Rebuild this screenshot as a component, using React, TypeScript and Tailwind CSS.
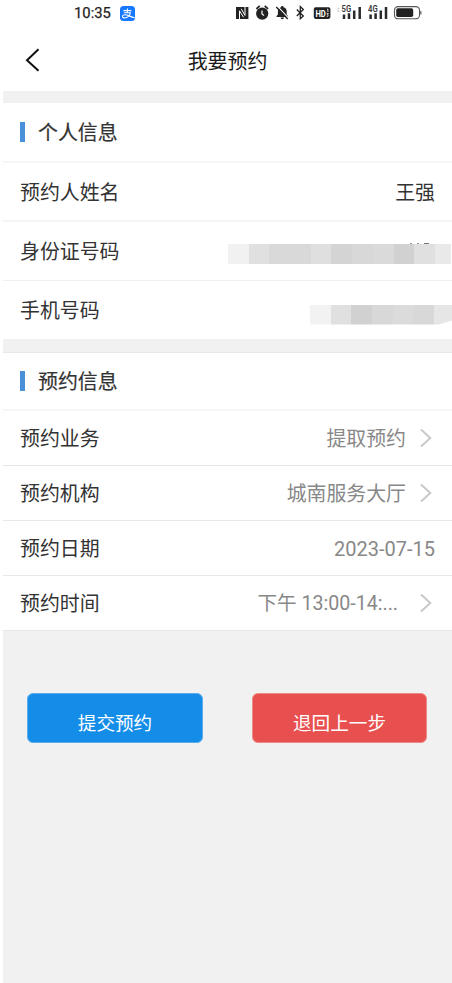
import type { ReactNode } from 'react'
import clsx from 'clsx'

const PAGE_LABELS = {
  TITLE: '我要预约',
  PERSONAL: '个人信息',
  BOOKING: '预约信息',
  SUBMIT: '提交预约',
  BACK: '退回上一步',
} as const

const ID_MASK = [
  '#f1f1f1',
  '#e0e0e0',
  '#d9d9d9',
  '#d9d9d9',
  '#dfdfdf',
  '#d4d4d4',
  '#d8d8d8',
  '#dadada',
  '#d1d1d1',
  '#e0e0e0',
  '#e9e9e9',
]

const PHONE_MASK = ['#f2f2f2', '#e0e0e0', '#d1d1d1', '#d8d8d8', '#dbdbdb', '#d8d8d8', '#e6e6e6']

function StatusIcons() {
  return (
    <svg className="ml-auto h-[26px] w-[192px]" viewBox="232 0 192 26" fill="none">
      {/* NFC */}
      <path d="M236 7h12.4v12H236z" fill="#222" />
      <path d="M239.5 19v-8.2l4 6.4M245 7v8.4l-3.8-6.6" stroke="#fff" strokeWidth="1" />
      {/* 闹钟 */}
      <circle cx="262.2" cy="13.6" r="6.1" fill="#222" />
      <path d="M256.3 8.8l3.4-2.8M268.1 8.8l-3.4-2.8" stroke="#222" strokeWidth="1.7" />
      <path d="M262 10.6v3.4l2 1.4" stroke="#fff" strokeWidth="1.2" />
      {/* 静音 */}
      <path
        d="M282.3 6c.8 0 1.2.5 1.2 1.2 2 .5 3.2 2 3.2 4v3.3l1.4 1.8v.7h-11.6v-.7l1.4-1.8v-3.3c0-2 1.2-3.5 3.2-4 0-.7.4-1.2 1.2-1.2z"
        fill="#222"
      />
      <path d="M280.6 17.6h3.4a1.7 1.7 0 0 1-3.4 0z" fill="#222" />
      <path d="M277.4 6.2l11 11.8" stroke="#fff" strokeWidth="1.1" />
      <path d="M276.3 7l11.4 12" stroke="#222" strokeWidth="1.4" />
      {/* 蓝牙 */}
      <path d="M296.8 9.5l6.5 6.5-3 2.8V6.6l3 2.8-6.5 6.6" stroke="#222" strokeWidth="1.3" />
      {/* HD */}
      <rect x="313.8" y="7.3" width="16.6" height="11.6" rx="1.8" fill="#222" />
      <text
        x="315.4"
        y="16.6"
        fill="#fff"
        fontSize="9.5"
        fontWeight="700"
        fontFamily="Roboto, sans-serif"
        textLength="10.4"
        lengthAdjust="spacingAndGlyphs"
      >
        HD
      </text>
      <path d="M327 9.2h.9v3M326.6 13.6h1.8l-1 1.3c1.2.2 1 1.9-.7 1.5" stroke="#fff" strokeWidth=".8" />
      {/* 5G */}
      <path d="M336.8 9.2l1.6-2 1.6 2zM336.8 10.6l1.6 2 1.6-2z" fill="#ccc" />
      <text
        x="341.6"
        y="12.2"
        fill="#333"
        fontSize="9.2"
        fontWeight="600"
        fontFamily="Roboto, sans-serif"
        textLength="9.6"
        lengthAdjust="spacingAndGlyphs"
      >
        5G
      </text>
      <path d="M344 14.6V19M349 13.2V19M354.2 10.5V19M359.7 7v12" stroke="#2a2a2a" strokeWidth="2.5" />
      {/* 4G */}
      <text
        x="368"
        y="12.2"
        fill="#333"
        fontSize="9.2"
        fontWeight="600"
        fontFamily="Roboto, sans-serif"
        textLength="9.6"
        lengthAdjust="spacingAndGlyphs"
      >
        4G
      </text>
      <path d="M370.6 14.6V19M375.6 13.2V19M380.8 10.5V19M386 7v12" stroke="#2a2a2a" strokeWidth="2.5" />
      {/* 电池 */}
      <rect x="394.5" y="6.6" width="25" height="12.2" rx="3.6" stroke="#555" strokeWidth="1.1" />
      <rect x="396.2" y="8.3" width="17" height="8.8" rx="1.8" fill="#222" />
      <path d="M420.8 11v3.6" stroke="#777" strokeWidth="1.4" />
    </svg>
  )
}

function SectionTitle({ className, children }: { className?: string; children: ReactNode }) {
  return (
    <div className={clsx('flex items-center border-b-2 border-[#f5f5f5] pl-[17px]', className)}>
      <span className="mr-[13px] h-5 w-[5px] bg-[#4a90d9]" />
      <h2 className="pt-1 [-webkit-text-stroke:0.2px_#333]">{children}</h2>
    </div>
  )
}

interface RowProps {
  label: string
  className?: string
  children: ReactNode
}

function Row({ label, className, children }: RowProps) {
  return (
    <div className={clsx('flex items-center justify-between pl-[17px]', className)}>
      <span className="pt-1">{label}</span>
      {children}
    </div>
  )
}

// 打码色块
function Mask({ shades, className }: { shades: string[]; className?: string }) {
  return (
    <div className={clsx('flex h-5 overflow-hidden', className)}>
      {shades.map((shade, i) => (
        <span key={i} className="w-[20.7px] shrink-0" style={{ backgroundColor: shade }} />
      ))}
    </div>
  )
}

interface SelectRowProps {
  label: string
  value: string
  arrow?: boolean
  gap?: string
  valueClass?: string
}

function SelectRow({ label, value, arrow = true, gap = 'ml-[14px]', valueClass = 'pt-1' }: SelectRowProps) {
  return (
    <Row label={label} className="h-[55px] border-b border-[#e8e8e8] pr-[17px]">
      <div className="flex items-center text-[#888]">
        <span className={valueClass}>{value}</span>
        {arrow && (
          <svg className={clsx('mr-[3px] h-5 w-3', gap)} viewBox="0 0 12 20" fill="none">
            <path d="M1 1.5l9.3 8.5L1 18.5" stroke="#c8c8c8" strokeWidth="1.9" />
          </svg>
        )}
      </div>
    </Row>
  )
}

export default function App() {
  return (
    <div className="h-[983px] w-[452px] overflow-hidden bg-white pl-[3px] font-[Roboto,'Noto_Sans_CJK_SC',sans-serif] text-[19.9px] leading-none text-[#333]">
      <div className="flex h-[26px] items-center pr-[28px] pl-[71px]">
        <span className="w-[37px] pt-px text-[14.8px] text-[#222] [-webkit-text-stroke:0.25px_#222]">10:35</span>
        <svg className="ml-[9px] h-[15px] w-[15px]" viewBox="0 0 15 15" fill="none">
          <rect width="15" height="15" rx="3.5" fill="#1677ff" />
          <path
            d="M3.4 4.6h8M7.4 2.6v4M4 6.7h6.5C9.7 9.4 7.5 12 4.6 12c-3 0-2.8-3.2.2-3.2 2.8 0 5.2 1.8 9.7 3"
            stroke="#fff"
            strokeWidth="1.1"
          />
        </svg>
        <StatusIcons />
      </div>

      <header className="grid h-[65px] grid-cols-[1fr_auto_1fr] items-center text-[#1a1a1a]">
        <svg className="mt-0.5 ml-[22px] h-6 w-4" viewBox="0 0 16 24" fill="none">
          <path d="M13.5 1.2L2 12.2l11.5 10.6" stroke="#111" strokeWidth="2" />
        </svg>
        <h1 className="pt-2">{PAGE_LABELS.TITLE}</h1>
      </header>

      <main className="h-[892px] bg-[#f1f1f1] pt-3">
        <section className="bg-white">
          <SectionTitle className="h-[60px]">{PAGE_LABELS.PERSONAL}</SectionTitle>
          <Row label="预约人姓名" className="h-[59px] border-b-2 border-[#f5f5f5] pr-[17px]">
            <span className="pt-1">王强</span>
          </Row>
          <Row label="身份证号码" className="h-[59px] border-b border-[#f0f0f0] pr-px">
            <div className="mt-1">
              {/* 未遮住的号码上沿 */}
              <div className="flex h-0.5 items-end gap-[5px] pl-[182px]">
                <span className="h-px w-0.5 bg-[#999]" />
                <span className="h-px w-0.5 bg-[#999]" />
                <span className="h-px w-[5px] bg-[#777]" />
              </div>
              <Mask shades={ID_MASK} className="w-[223px]" />
            </div>
          </Row>
          <Row label="手机号码" className="h-[58px]">
            <Mask
              shades={PHONE_MASK}
              className="mt-[9px] w-[142px] [clip-path:polygon(0_0,100%_0,100%_80%,91%_100%,0_100%)]"
            />
          </Row>
        </section>

        <section className="mt-[13px] border-t border-[#e8e8e8] bg-white">
          <SectionTitle className="h-[58px]">{PAGE_LABELS.BOOKING}</SectionTitle>
          <SelectRow label="预约业务" value="提取预约" />
          <SelectRow label="预约机构" value="城南服务大厅" />
          <SelectRow label="预约日期" value="2023-07-15" arrow={false} valueClass="pt-px text-[20px]" />
          <SelectRow label="预约时间" value="下午 13:00-14:..." gap="ml-[22px]" valueClass="pt-0.5 text-[19.6px]" />
        </section>

        <div className="mt-[62px] flex justify-between pr-[25px] pl-6 text-[18.6px] text-white">
          <button className="h-[50px] w-[176px] rounded-md border border-[#5aacec] bg-[#148de9] pt-3">
            {PAGE_LABELS.SUBMIT}
          </button>
          <button className="h-[50px] w-[175px] rounded-md border border-[#ee8a8a] bg-[#e85050] pt-3">
            {PAGE_LABELS.BACK}
          </button>
        </div>
      </main>
    </div>
  )
}
